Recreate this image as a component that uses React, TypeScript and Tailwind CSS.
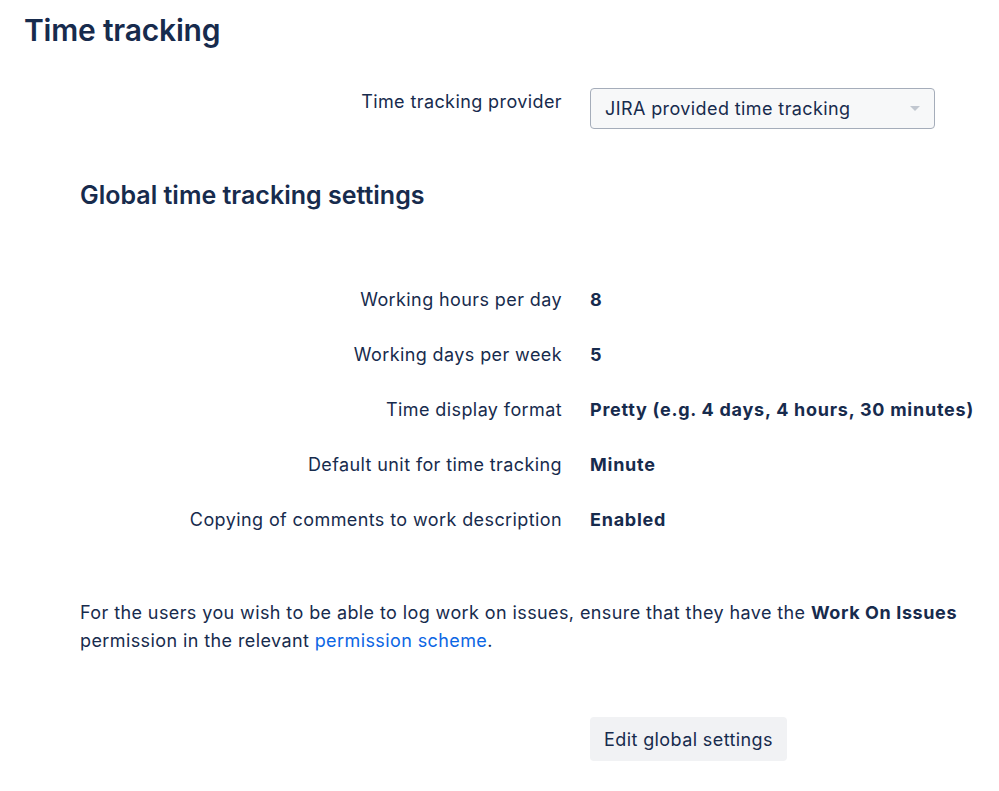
const font = { fontFamily: "Inter, 'Noto Sans', sans-serif" };

const settings = [
  { label: "Working hours per day", value: "8" },
  { label: "Working days per week", value: "5" },
  { label: "Time display format", value: "Pretty (e.g. 4 days, 4 hours, 30 minutes)" },
  { label: "Default unit for time tracking", value: "Minute" },
  { label: "Copying of comments to work description", value: "Enabled" },
];

export default function App() {
  return (
    <div
      className="min-h-[791px] w-[999px] bg-white text-[#172b4d]"
      style={font}
    >
      <div className="px-6 pt-[11px]">
        <h1 className="text-[30px] font-semibold leading-[38px] tracking-[-0.2px]">
          Time tracking
        </h1>
      </div>

      <div className="mt-[39px] grid grid-cols-[562px_345px] gap-x-7 tracking-[0.4px]">
        <div className="pt-[2px] text-right text-[18px] leading-[24px]">
          Time tracking provider
        </div>
        <div className="flex h-[41px] items-center justify-between rounded-[4px] border border-[#a5adba] bg-[#f7f8f9] pl-[14px] pr-[14px] text-[18px]">
          <span>JIRA provided time tracking</span>
          <span className="h-0 w-0 border-x-[5px] border-t-[5px] border-x-transparent border-t-[#c1c7d0]" />
        </div>
      </div>

      <h2 className="ml-20 mt-[50px] text-[25px] font-semibold leading-[32px]">
        Global time tracking settings
      </h2>

      <div className="mt-[77px] grid grid-cols-[562px_1fr] gap-x-7 gap-y-[31px] text-[18px] leading-[24px] tracking-[0.4px]">
        {settings.map((s) => (
          <div key={s.label} className="contents">
            <div className="text-right">{s.label}</div>
            <div className="font-bold tracking-[0.75px]">{s.value}</div>
          </div>
        ))}
      </div>

      <p className="ml-20 mt-[67px] w-[910px] text-[18px] leading-[28px] tracking-[0.4px]">
        For the users you wish to be able to log work on issues, ensure that they have the{" "}
        <b className="tracking-[0.6px]">Work On Issues</b> permission in the relevant{" "}
        <a className="text-[#0c66e4]" href="#">
          permission scheme
        </a>
        .
      </p>

      <div className="ml-[590px] mt-[62px]">
        <button className="h-[44px] rounded-[4px] bg-[#f1f2f4] px-[14px] text-[18px] tracking-[0.4px] text-[#172b4d]">
          Edit global settings
        </button>
      </div>
    </div>
  );
}
